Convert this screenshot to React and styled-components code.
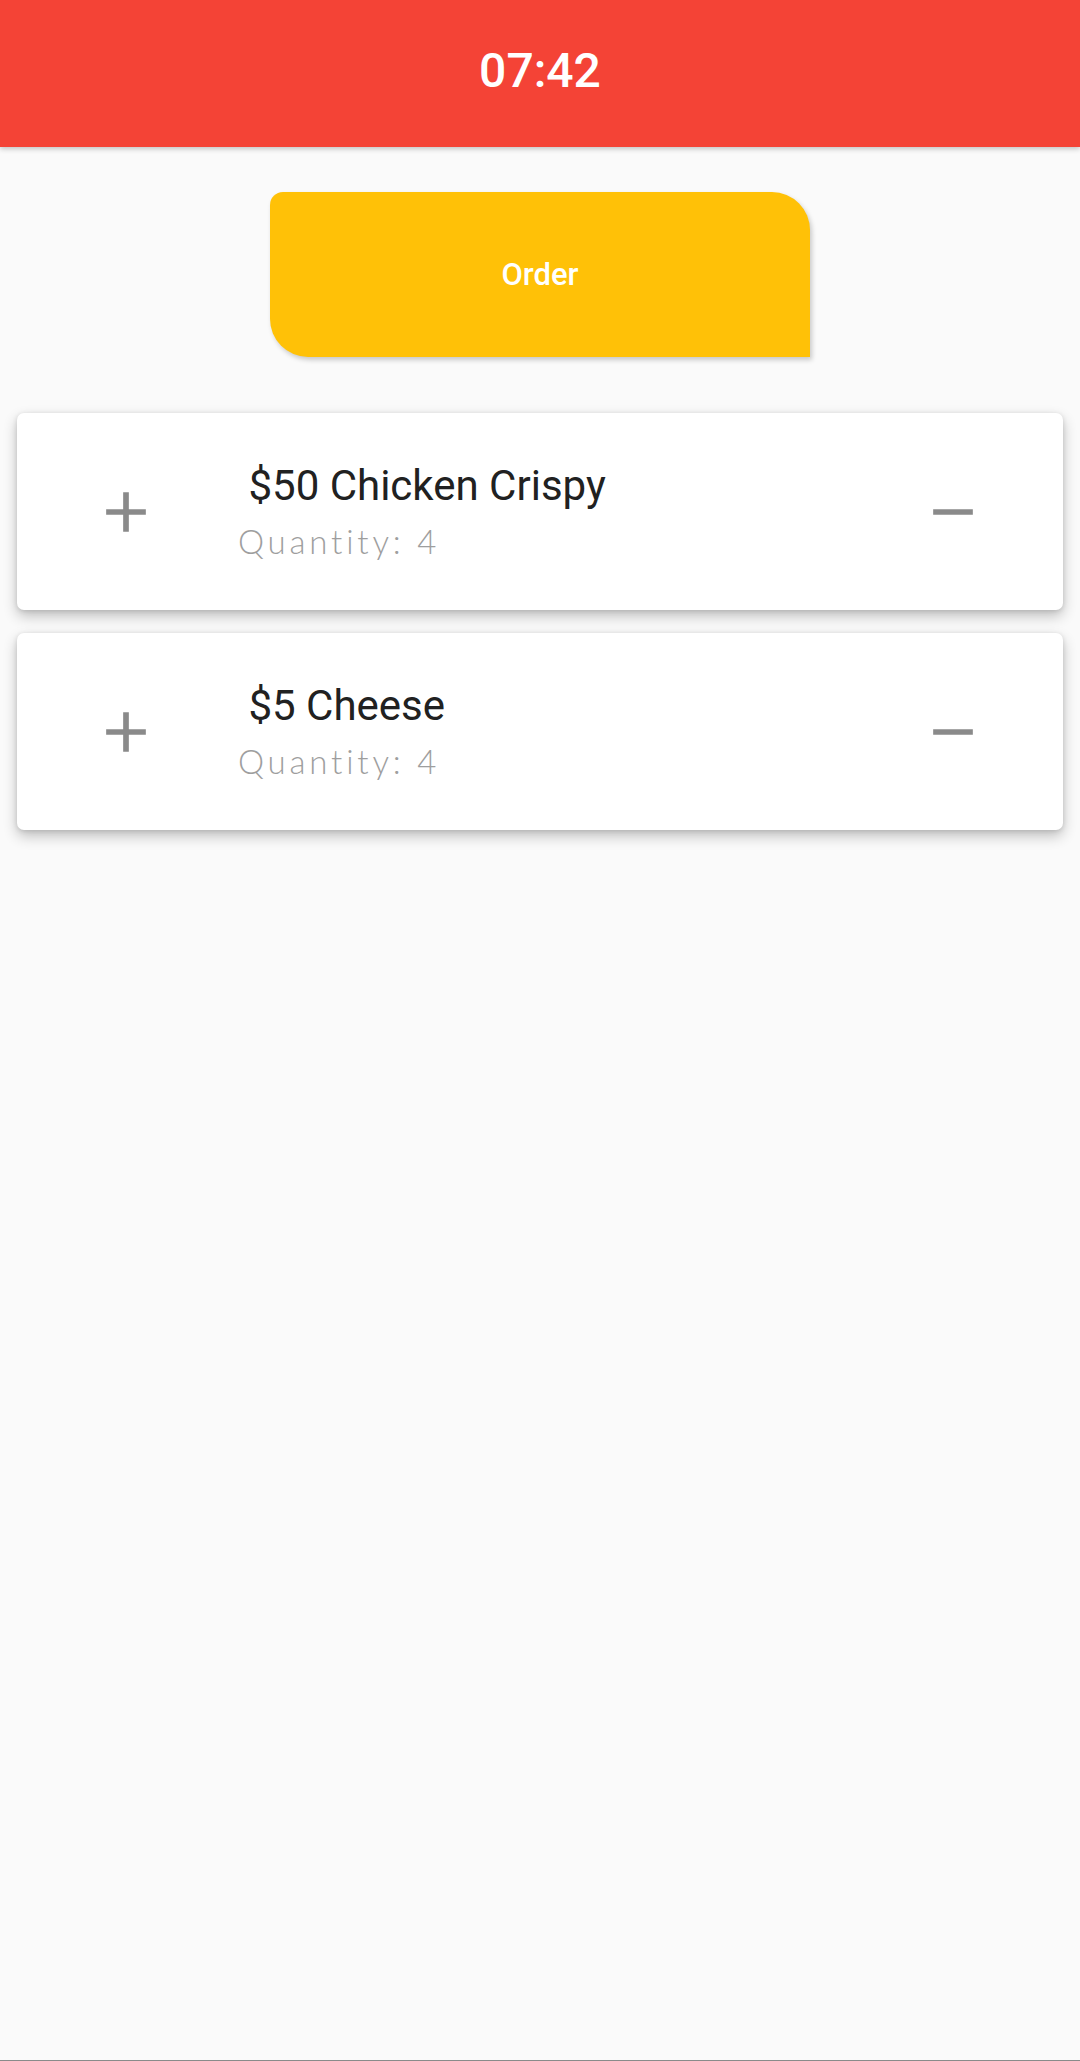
import React from "react";
import styled, { createGlobalStyle } from "styled-components";

const GlobalStyle = createGlobalStyle`
  * {
    box-sizing: border-box;
  }
  body {
    margin: 0;
    background: #fafafa;
    font-family: Roboto, "Liberation Sans", sans-serif;
  }
`;

const items = [
  { id: 1, price: 50, name: "Chicken Crispy", quantity: 4 },
  { id: 2, price: 5, name: "Cheese", quantity: 4 },
];

export default function App() {
  return (
    <>
      <GlobalStyle />
      <Page>
        <Header>
          <Clock>07:42</Clock>
        </Header>
        <OrderButton type="button">Order</OrderButton>
        <List>
          {items.map((item) => (
            <Card key={item.id}>
              <IconButton type="button" aria-label="add">
                <svg width="68" height="68" viewBox="0 0 24 24">
                  <path d="M19 13h-6v6h-2v-6H5v-2h6V5h2v6h6v2z" fill="#8a8a8a" />
                </svg>
              </IconButton>
              <Info>
                <Title> ${item.price} {item.name}</Title>
                <Subtitle>Quantity: {item.quantity}</Subtitle>
              </Info>
              <IconButton type="button" aria-label="remove">
                <svg width="68" height="68" viewBox="0 0 24 24">
                  <path d="M19 13H5v-2h14v2z" fill="#8a8a8a" />
                </svg>
              </IconButton>
            </Card>
          ))}
        </List>
      </Page>
    </>
  );
}

const Page = styled.div`
  min-height: 2061px;
  display: flex;
  flex-direction: column;
  align-items: center;
  background: #fafafa;
  border-bottom: 1px solid #8a8a8a;
`;

const Header = styled.header`
  width: 100%;
  height: 147px;
  background: #f44336;
  display: flex;
  align-items: center;
  justify-content: center;
  padding-bottom: 6px;
  box-shadow: 0 2px 5px rgba(0, 0, 0, 0.22);
  position: relative;
  z-index: 1;
`;

const Clock = styled.h1`
  margin: 0;
  color: #fff;
  font-family: Roboto, "Liberation Sans", sans-serif;
  font-size: 48px;
  font-weight: 500;
  line-height: 1;
`;

const OrderButton = styled.button`
  margin-top: 45px;
  width: 540px;
  height: 165px;
  border: none;
  background: #ffc107;
  border-radius: 13px 38px 0 38px;
  color: #fff;
  font-family: Roboto, "Liberation Sans", sans-serif;
  font-size: 31px;
  font-weight: 500;
  box-shadow: 2px 3px 5px rgba(0, 0, 0, 0.2);
  cursor: pointer;
`;

const List = styled.div`
  width: 100%;
  margin-top: 56px;
  padding: 0 17px;
  display: flex;
  flex-direction: column;
  gap: 23px;
`;

const Card = styled.div`
  height: 197px;
  background: #fff;
  border-radius: 7px;
  display: flex;
  align-items: center;
  padding: 0 76px 0 75px;
  box-shadow: 0 6px 14px rgba(0, 0, 0, 0.24), 0 1px 5px rgba(0, 0, 0, 0.12);
`;

const IconButton = styled.button`
  width: 68px;
  height: 68px;
  padding: 0;
  border: none;
  background: transparent;
  display: flex;
  align-items: center;
  justify-content: center;
  cursor: pointer;
`;

const Info = styled.div`
  flex: 1;
  margin-left: 78px;
  display: flex;
  flex-direction: column;
`;

const Title = styled.div`
  color: #212121;
  font-family: Roboto, "Liberation Sans", sans-serif;
  font-size: 42px;
  line-height: 50px;
  white-space: pre;
`;

const Subtitle = styled.div`
  margin-top: 8px;
  color: #9e9e9e;
  font-family: Lato, "Open Sans", sans-serif;
  font-weight: 300;
  font-size: 33px;
  line-height: 44px;
  letter-spacing: 3.8px;
`;
